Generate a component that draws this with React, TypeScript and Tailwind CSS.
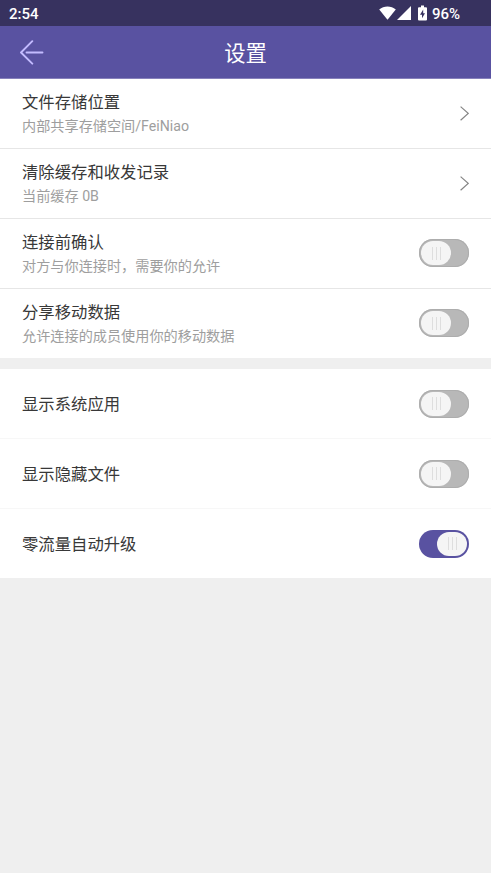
import { useState } from 'react';

interface LinkItem {
  description: string;
  title: string;
}

interface SwitchItem {
  description?: string;
  id: string;
  title: string;
}

const LINKS: LinkItem[] = [
  { title: '文件存储位置', description: '内部共享存储空间/FeiNiao' },
  { title: '清除缓存和收发记录', description: '当前缓存 0B' },
];

const CONNECTION_SWITCHES: SwitchItem[] = [
  { id: 'confirm', title: '连接前确认', description: '对方与你连接时，需要你的允许' },
  { id: 'mobileData', title: '分享移动数据', description: '允许连接的成员使用你的移动数据' },
];

const DISPLAY_SWITCHES: SwitchItem[] = [
  { id: 'systemApps', title: '显示系统应用' },
  { id: 'hiddenFiles', title: '显示隐藏文件' },
  { id: 'autoUpgrade', title: '零流量自动升级' },
];

function StatusBar() {
  return (
    <div className="flex h-[26px] items-center justify-between bg-[#37325f] pr-[31px] pl-[9px] text-[15px] leading-[26px] font-medium text-white">
      <span className="pt-[2px]">2:54</span>
      <div className="flex items-center">
        <svg className="h-[14px] w-[17px]" fill="currentColor" viewBox="0 0 17 14">
          <path d="M8.5 13.7 0.2 3.4C2.6 1.4 5.4 0.4 8.5 0.4s5.9 1 8.3 3z" />
        </svg>
        <svg className="ml-[1px] h-[14px] w-[14px]" fill="currentColor" viewBox="0 0 14 14">
          <path d="M14 0v14H0z" />
        </svg>
        <svg className="ml-[7px] h-[16px] w-[9px]" viewBox="0 0 9 16">
          <path d="M3 0.5h3v1.7h2a1 1 0 0 1 1 1v11.3a1 1 0 0 1-1 1H1a1 1 0 0 1-1-1V3.2a1 1 0 0 1 1-1h2z" fill="currentColor" />
          <path d="M5.2 4.5 2 9.7h2v3.5l3-5H5.2z" fill="#37325f" />
        </svg>
        <span className="ml-[5px] pt-[2px]">96%</span>
      </div>
    </div>
  );
}

function Header() {
  return (
    <header className="grid h-[53px] grid-cols-[1fr_auto_1fr] items-center border-b border-[#8781bb] bg-[#5952a1]">
      <button aria-label="返回" className="ml-[19px] h-[26px] w-[26px]" type="button">
        <svg className="h-[26px] w-[26px]" fill="none" stroke="#c3bbff" strokeLinecap="round" strokeWidth="1.9" viewBox="0 0 26 26">
          <path d="M13.3 2.2 2 13.5l11.3 11.2M7.5 13.5h16" strokeLinejoin="round" />
        </svg>
      </button>
      <h1 className="pt-[3px] text-[21.3px] leading-[30px] text-white">设置</h1>
    </header>
  );
}

function RowText({ title, description }: { title: string; description?: string }) {
  return (
    <div className="flex flex-col">
      <span className={['pt-[2px] text-[16.35px] text-[#383838]', description ? 'leading-[22px]' : 'leading-[24px]'].join(' ')}>
        {title}
      </span>
      {description && <span className="text-[14.17px] leading-[24px] text-[#9e9e9e]">{description}</span>}
    </div>
  );
}

function Switch({ checked, label, onChange }: { checked: boolean; label: string; onChange: () => void }) {
  return (
    <button
      aria-checked={checked}
      aria-label={label}
      className={[
        'flex h-[28px] w-[50px] items-center rounded-full px-[2px]',
        checked ? 'justify-end bg-[#5952a1]' : 'bg-[#b8b8b8] shadow-[inset_0_0_0_1px_#adadad]',
      ].join(' ')}
      onClick={onChange}
      role="switch"
      type="button"
    >
      <span className="flex h-[24px] w-[30px] items-center justify-center gap-[3px] rounded-full bg-[#f5f5f5]">
        <span className="h-[13px] w-px bg-[#dedede]" />
        <span className="h-[13px] w-px bg-[#dedede]" />
        <span className="h-[13px] w-px bg-[#dedede]" />
      </span>
    </button>
  );
}

export default function App() {
  const [enabled, setEnabled] = useState<Record<string, boolean>>({ autoUpgrade: true });

  const toggle = (id: string) => setEnabled((current) => ({ ...current, [id]: !current[id] }));

  return (
    <div className="min-h-screen bg-[#efefef] font-[Roboto,'Noto_Sans_CJK_SC',sans-serif]">
      <StatusBar />
      <Header />

      <section className="bg-white">
        {LINKS.map((item) => (
          <div className="flex h-[70px] items-center justify-between border-b border-[#e6e6e6] px-[22px]" key={item.title}>
            <RowText description={item.description} title={item.title} />
            <svg className="mb-[1px] h-[16px] w-[9px]" fill="none" stroke="#858585" strokeWidth="1.2" viewBox="0 0 9 16">
              <path d="M0.6 1.6 8.2 8.4 0.6 15.2" />
            </svg>
          </div>
        ))}
        {CONNECTION_SWITCHES.map((item) => (
          <div
            className="flex h-[70px] items-center justify-between border-b border-[#e6e6e6] px-[22px] last:h-[69px] last:border-b-0"
            key={item.id}
          >
            <RowText description={item.description} title={item.title} />
            <div className="pb-px">
              <Switch checked={!!enabled[item.id]} label={item.title} onChange={() => toggle(item.id)} />
            </div>
          </div>
        ))}
      </section>

      <section className="mt-[11px] bg-white">
        {DISPLAY_SWITCHES.map((item) => (
          <div
            className="flex h-[70px] items-center justify-between border-b border-[#f7f7f7] px-[22px] last:h-[69px] last:border-b-0"
            key={item.id}
          >
            <RowText title={item.title} />
            <Switch checked={!!enabled[item.id]} label={item.title} onChange={() => toggle(item.id)} />
          </div>
        ))}
      </section>
    </div>
  );
}
